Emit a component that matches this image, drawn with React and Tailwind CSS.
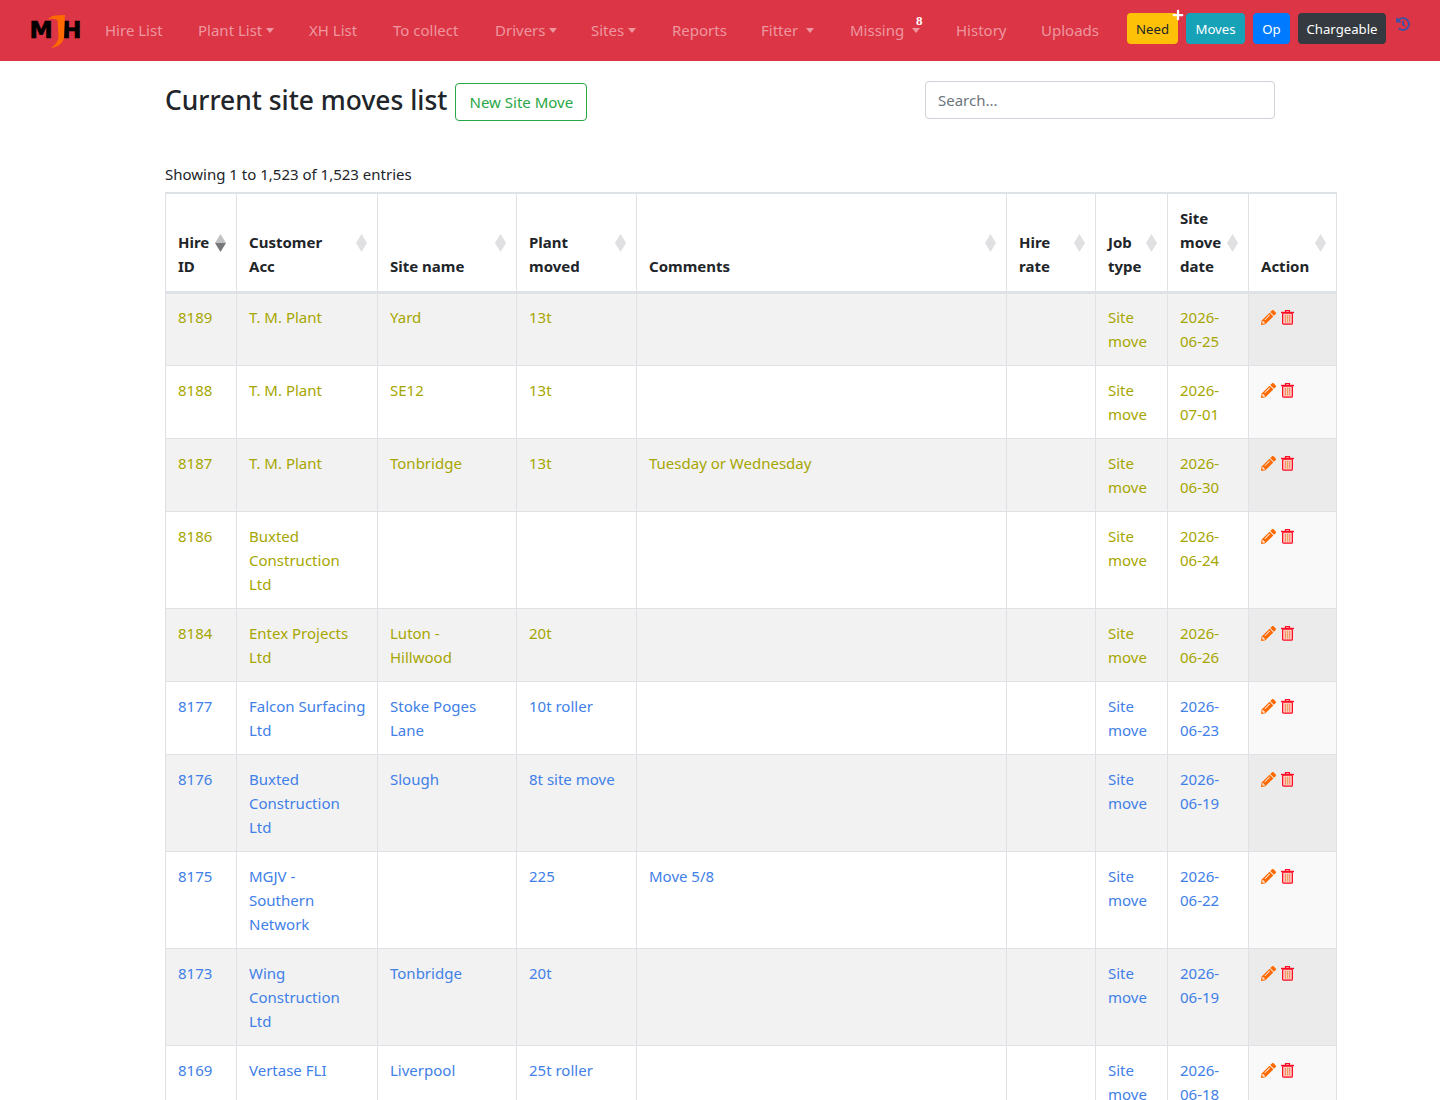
import React from "react";
import { FaPencilAlt, FaHistory, FaPlus } from "react-icons/fa";

const OLIVE = "text-[#a6a600]";
const BLUE = "text-[#4080e8]";

const nav = [
  ["Hire List", "w-[93px]", false],
  ["Plant List", "w-[111px]", true],
  ["XH List", "w-[84px]", false],
  ["To collect", "w-[102px]", false],
  ["Drivers", "w-[96px]", true],
  ["Sites", "w-[81px]", true],
  ["Reports", "w-[89px]", false],
  ["Fitter", "w-[89px]", true, true],
  ["Missing", "w-[106px]", true, true],
  ["History", "w-[85px]", false],
  ["Uploads", "w-[86px]", false],
];

const rows = [
  ["8189", ["T. M. Plant"], ["Yard"], "13t", "", "2026-", "06-25", "h-[73px]", 1],
  ["8188", ["T. M. Plant"], ["SE12"], "13t", "", "2026-", "07-01", "h-[73px]", 1],
  ["8187", ["T. M. Plant"], ["Tonbridge"], "13t", "Tuesday or Wednesday", "2026-", "06-30", "h-[73px]", 1],
  ["8186", ["Buxted", "Construction", "Ltd"], [], "", "", "2026-", "06-24", "h-[97px]", 1],
  ["8184", ["Entex Projects", "Ltd"], ["Luton -", "Hillwood"], "20t", "", "2026-", "06-26", "h-[73px]", 1],
  ["8177", ["Falcon Surfacing", "Ltd"], ["Stoke Poges", "Lane"], "10t roller", "", "2026-", "06-23", "h-[73px]", 0],
  ["8176", ["Buxted", "Construction", "Ltd"], ["Slough"], "8t site move", "", "2026-", "06-19", "h-[97px]", 0],
  ["8175", ["MGJV -", "Southern", "Network"], [], "225", "Move 5/8", "2026-", "06-22", "h-[97px]", 0],
  ["8173", ["Wing", "Construction", "Ltd"], ["Tonbridge"], "20t", "", "2026-", "06-19", "h-[97px]", 0],
  ["8169", ["Vertase FLI"], ["Liverpool"], "25t roller", "", "2026-", "06-18", "h-[73px]", 0],
];

const heads = [
  [["Hire", "ID"], "w-[71px]", "right-[10px]", true],
  [["Customer", "Acc"], "w-[141px]", "right-[10px]"],
  [["Site name"], "w-[139px]", "right-[10px]"],
  [["Plant", "moved"], "w-[120px]", "right-[10px]"],
  [["Comments"], "w-[370px]", "right-[10px]"],
  [["Hire", "rate"], "w-[89px]", "right-[10px]"],
  [["Job", "type"], "w-[72px]", "right-[10px]"],
  [["Site", "move", "date"], "w-[81px]", "right-[10px]"],
  [["Action"], "w-[88px]", "right-[10px]"],
];

function Sort({ pos, active }) {
  return (
    <svg className={`absolute top-[40px] ${pos}`} width="11" height="18" viewBox="0 0 11 18">
      <path d="M5.5 0 L11 9 H0 Z" fill={active ? "#c2c2c4" : "#e0e0e2"} />
      <path d="M5.5 18 L11 9 H0 Z" fill={active ? "#77787c" : "#e0e0e2"} />
    </svg>
  );
}

function Trash() {
  return (
    <svg width="13" height="15" viewBox="0 0 13 15" className="block">
      <path d="M4.5 2 V0.7 H8.5 V2" fill="none" stroke="#ff0d25" strokeWidth="1.2" />
      <rect x="0" y="1.8" width="13" height="1.4" fill="#ff0d25" />
      <rect x="1.6" y="3.2" width="9.8" height="11" rx="1" fill="#ffc9bd" stroke="#ff0d25" strokeWidth="1.2" />
      <rect x="3.9" y="5" width="1.1" height="7.5" fill="#f58a70" />
      <rect x="6" y="5" width="1.1" height="7.5" fill="#e8a850" />
      <rect x="8.1" y="5" width="1.1" height="7.5" fill="#f58a70" />
    </svg>
  );
}

function Logo() {
  return (
    <svg width="54" height="36" viewBox="0 0 54 36" className="block">
      <text x="-0.5" y="25" fontFamily="'DejaVu Sans', sans-serif" fontWeight="700" fontSize="23.3" fill="#000" stroke="#000" strokeWidth="0.6">M</text>
      <text x="32" y="25" fontFamily="'DejaVu Sans', sans-serif" fontWeight="700" fontSize="23.3" fill="#000" stroke="#000" strokeWidth="0.6">H</text>
      <path d="M18 6.5 C20 4 23 2.5 26 2.5 L35 2 L34 24 C33.5 30 28 34 21 35 C25 32 28 29 28.5 24 L27.5 7 C24 5.5 21 5.5 18 6.5 Z" fill="#ff6a00" />
    </svg>
  );
}

function Caret({ className = "" }) {
  return <span className={`inline-block ml-[4px] align-[3px] border-x-[4px] border-x-transparent border-t-[5px] border-t-[#ee97a0] ${className}`} />;
}

export default function App() {
  return (
    <div className="h-[1100px] overflow-hidden bg-white text-[#212529] text-[15px] leading-[24px] font-['Noto_Sans','Open_Sans',sans-serif]">
      <nav className="h-[61px] bg-[#dc3545] flex items-center pl-[30px]">
        <div className="w-[75px] h-[61px] flex items-center"><Logo /></div>
        {nav.map(([t, w, caret, sp]) => (
          <div key={t} className={`${w} shrink-0 text-[#ee97a0] relative whitespace-nowrap mb-[2px]`}>
            {t}
            {caret && <Caret className={sp ? "ml-[8px]" : ""} />}
            {t === "Missing" && <span className="absolute left-[66px] top-[-4px] text-white text-[13px] leading-[14px] font-bold font-['Liberation_Serif',serif]">8</span>}
          </div>
        ))}
        <div className="absolute left-[1127px] top-[13px] flex gap-[8px] text-[13.2px]">
          <div className="relative w-[51px] h-[31px] rounded-[4px] bg-[#ffc107] flex items-center justify-center">
            Need
            <FaPlus className="absolute right-[-6px] top-[-4px] text-white" size={12} />
          </div>
          <div className="w-[59px] h-[31px] rounded-[4px] bg-[#17a2b8] text-white flex items-center justify-center">Moves</div>
          <div className="w-[37px] h-[31px] rounded-[4px] bg-[#007bff] text-white flex items-center justify-center">Op</div>
          <div className="w-[88px] h-[31px] rounded-[4px] bg-[#343a40] text-white flex items-center justify-center">Chargeable</div>
          <FaHistory className="ml-[2px] mt-[4px] text-[#3553a8]" size={14} />
        </div>
      </nav>

      <main className="pl-[165px]">
        <div className="h-[131px] relative">
          <div className="flex items-start gap-[8px] pt-[22px]">
            <h3 className="text-[26.4px] leading-[34px] font-medium">Current site moves list</h3>
            <span className="w-[132px] h-[38px] pb-[1px] rounded-[4px] border border-[#28a745] text-[#28a745] flex items-center justify-center">New Site Move</span>
          </div>
          <div className="absolute left-[760px] top-[20px] w-[350px] h-[38px] pb-[1px] rounded-[4px] border border-[#ced4da] px-[12px] flex items-center text-[#6c757d]">Search...</div>
          <div className="absolute left-0 top-[101px]">Showing 1 to 1,523 of 1,523 entries</div>
        </div>

        <table className="table-fixed w-[1172px] border-collapse border border-[#dee2e6]">
          <thead>
            <tr className="h-[99px]">
              {heads.map(([lines, w, pos, active], i) => (
                <th key={i} className={`${w} relative border border-[#dee2e6] border-t-2 border-b-[3px] px-[12px] pb-[13px] align-bottom text-left font-bold`}>
                  {lines.map((l) => <div key={l}>{l}</div>)}
                  <Sort pos={pos} active={active} />
                </th>
              ))}
            </tr>
          </thead>
          <tbody>
            {rows.map((r, i) => {
              const color = r[8] ? OLIVE : BLUE;
              const odd = i % 2 === 0;
              const pad = i === 0 ? "pt-[11px]" : "pt-[12px]";
              const cell = `border border-[#dee2e6] px-[12px] ${pad} align-top ${color}`;
              return (
                <tr key={r[0]} className={`${r[7]} ${odd ? "bg-[#f2f2f2]" : "bg-white"}`}>
                  <td className={cell}>{r[0]}</td>
                  <td className={cell}>{r[1].map((l) => <div key={l} className="whitespace-nowrap">{l}</div>)}</td>
                  <td className={cell}>{r[2].map((l) => <div key={l} className="whitespace-nowrap">{l}</div>)}</td>
                  <td className={cell}>{r[3]}</td>
                  <td className={cell}>{r[4]}</td>
                  <td className={cell}></td>
                  <td className={cell}><div>Site</div><div>move</div></td>
                  <td className={cell}><div>{r[5]}</div><div>{r[6]}</div></td>
                  <td className={`border border-[#dee2e6] px-[12px] ${pad} align-top ${odd ? "bg-[#ebebeb]" : "bg-[#f9f9f9]"}`}>
                    <div className="flex items-center gap-[5px] h-[26px]">
                      <FaPencilAlt className="text-[#ff6a00]" size={15} />
                      <Trash />
                    </div>
                  </td>
                </tr>
              );
            })}
          </tbody>
        </table>
      </main>
    </div>
  );
}
